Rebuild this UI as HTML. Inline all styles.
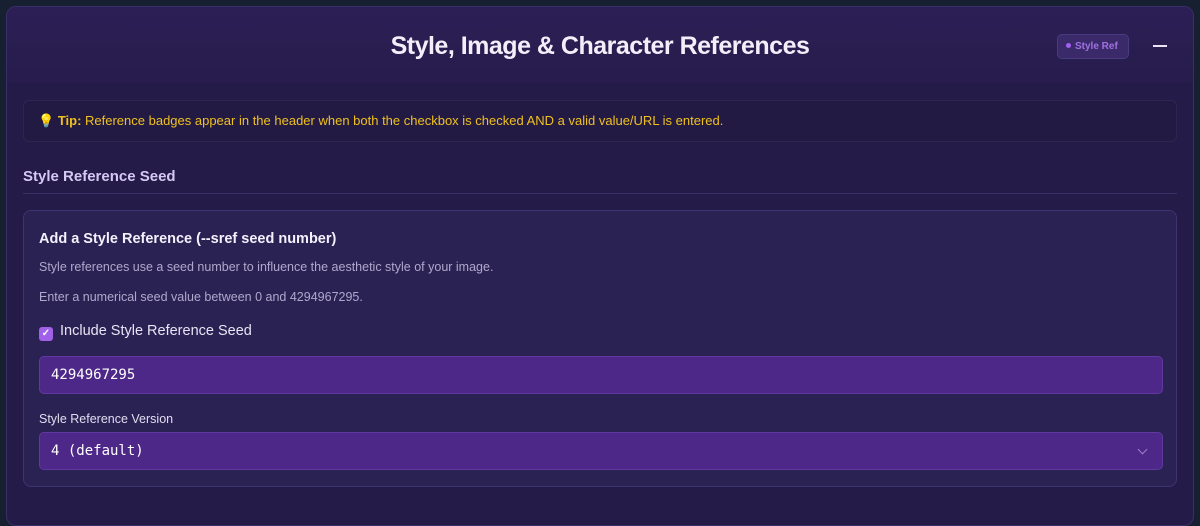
<!DOCTYPE html>
<html><head><style>
*{box-sizing:border-box;margin:0;padding:0}
body{width:1200px;height:502px;background:#162030;font-family:"Liberation Sans",sans-serif;overflow:hidden}
.panel{position:absolute;left:6px;top:6px;width:1188px;height:520px;background:#251b48;border:1px solid #3a2e66;border-radius:10px;overflow:hidden}
.hdr{height:76px;background:linear-gradient(180deg,#2c1f56,#271c4c);position:relative}
.hdr h1{position:absolute;left:0;right:0;top:25px;text-align:center;color:#f2effa;font-size:25px;font-weight:bold;letter-spacing:-0.5px}
.badge{position:absolute;left:1050px;top:27px;width:72px;height:25px;border:1px solid #4a3a80;background:#3a2a6a;border-radius:5px;color:#a070e0;font-size:10px;font-weight:bold;line-height:23px;padding-left:8px}
.badge i{display:inline-block;width:5px;height:5px;border-radius:50%;background:#a060f0;margin-right:4px;vertical-align:1px}
.minus{position:absolute;left:1146px;top:38px;width:14px;height:2px;background:#e8e4f4}
.tip{position:absolute;left:16px;top:93px;width:1154px;height:42px;background:#221a42;border:1px solid #2e2652;border-radius:6px;color:#f0c020;font-size:13px;line-height:40px;padding-left:14px}
.sec{position:absolute;left:16px;top:161px;color:#d6c8f4;font-size:15px;font-weight:bold}
.line{position:absolute;left:16px;top:186px;width:1154px;height:1px;background:#3a3066}
.card{position:absolute;left:16px;top:203px;width:1154px;height:277px;background:#2b2254;border:1px solid #3e3470;border-radius:8px}
.card h2{position:absolute;left:15px;top:20px;color:#f4f0fc;font-size:14.5px;font-weight:bold}
.p1,.p2{position:absolute;left:15px;color:#b0a8cc;font-size:12.5px}
.p1{top:49px}.p2{top:79px}
.chk{position:absolute;left:15px;top:111px;color:#e8e4f4;font-size:14.5px;line-height:18px}
.chk b{display:inline-block;width:14px;height:14px;background:#a060e8;border-radius:3px;vertical-align:-1px;margin-right:7px;color:#fff;font-size:10px;text-align:center;line-height:14px}
.inp{position:absolute;left:15px;width:1124px;height:38px;background:#4e2888;border:1px solid #6038a0;border-radius:5px;color:#fff;font-family:"DejaVu Sans Mono","Liberation Mono",monospace;font-size:14px;line-height:37px;padding-left:11px}
.i1{top:145px}.i2{top:221px}
.lab{position:absolute;left:15px;top:201px;color:#e0dcef;font-size:12.5px}
.arr{position:absolute;right:16px;top:13px;width:7px;height:7px;border-right:1.5px solid #9a80c8;border-bottom:1.5px solid #9a80c8;transform:rotate(45deg)}
</style></head><body>
<div class="panel">
<div class="hdr"><h1>Style, Image &amp; Character References</h1>
<div class="badge"><i></i>Style Ref</div><div class="minus"></div></div>
<div class="tip">💡 <b>Tip:</b> Reference badges appear in the header when both the checkbox is checked AND a valid value/URL is entered.</div>
<div class="sec">Style Reference Seed</div>
<div class="line"></div>
<div class="card">
<h2>Add a Style Reference (--sref seed number)</h2>
<div class="p1">Style references use a seed number to influence the aesthetic style of your image.</div>
<div class="p2">Enter a numerical seed value between 0 and 4294967295.</div>
<div class="chk"><b>✓</b>Include Style Reference Seed</div>
<div class="inp i1">4294967295</div>
<div class="lab">Style Reference Version</div>
<div class="inp i2">4 (default)<span class="arr"></span></div>
</div>
</div>
</body></html>
